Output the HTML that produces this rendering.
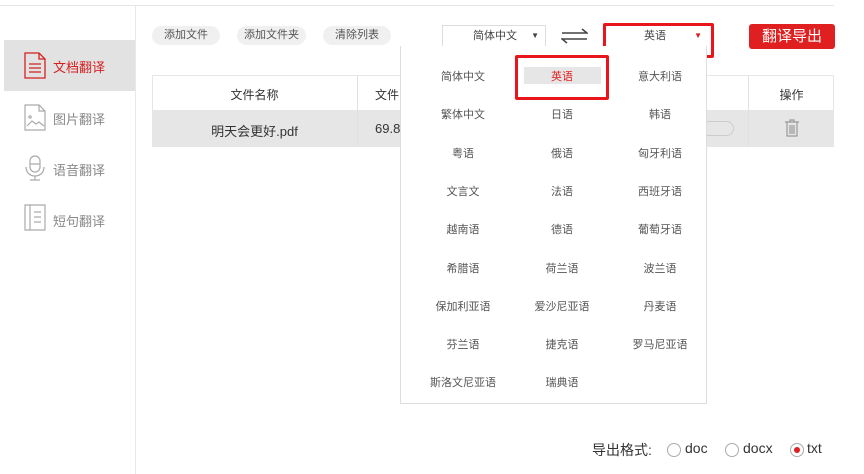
<!DOCTYPE html>
<html><head><meta charset="utf-8"><style>
*{margin:0;padding:0;box-sizing:border-box}
body{width:864px;height:474px;background:#fff;font-family:"Liberation Sans","Noto Sans CJK SC",sans-serif;position:relative;overflow:hidden;color:#333}
.a{position:absolute}
.side{left:0;top:6px;width:136px;height:468px;border-right:1px solid #e8e8e8}
.nav{position:absolute;left:4px;width:131px;height:51px;font-size:13px;color:#888}
.nav span{position:absolute;left:49px;top:17px}
.btn{position:absolute;top:26px;height:19px;background:#f0f0f0;border-radius:10px;font-size:11px;color:#555;text-align:center;line-height:19px}
.it{position:absolute;font-size:11px;color:#555;width:98px;text-align:center}
</style></head><body>
<div class="a" style="left:0;top:5px;width:834px;height:1px;background:#e6e6e6"></div>
<div class="a side"></div>
<div class="nav" style="top:40px;background:#e2e2e2;color:#d42020"><svg class="a" style="left:20px;top:12px" width="22" height="27" viewBox="0 0 22 27" fill="none" stroke="#d42020" stroke-width="1.3"><path d="M1 1h14l6 6v19H1z M15 1v6h6 M5 12h12 M5 16h12 M5 20h12"/></svg><span>文档翻译</span></div>
<div class="nav" style="top:92px"><svg class="a" style="left:20px;top:12px" width="22" height="27" viewBox="0 0 22 27" fill="none" stroke="#aaa" stroke-width="1.2"><path d="M1 1h14l6 6v19H1z M15 1v6h6 M3 22l5-5 4 3 3-2 5 4"/><circle cx="6" cy="13" r="1.2"/></svg><span>图片翻译</span></div>
<div class="nav" style="top:143px"><svg class="a" style="left:20px;top:12px" width="22" height="27" viewBox="0 0 22 27" fill="none" stroke="#aaa" stroke-width="1.2"><rect x="6" y="1" width="10" height="16" rx="5"/><path d="M6 9h10 M2 12c0 12 18 12 18 0 M11 21v4 M6 25h10"/></svg><span>语音翻译</span></div>
<div class="nav" style="top:194px"><svg class="a" style="left:20px;top:10px" width="22" height="27" viewBox="0 0 22 27" fill="none" stroke="#aaa" stroke-width="1.2"><path d="M1 1h20v25H1z M6 1v25 M10 8h7 M10 13h7 M10 18h7"/></svg><span>短句翻译</span></div>

<div class="btn" style="left:152px;width:68px">添加文件</div>
<div class="btn" style="left:237px;width:69px">添加文件夹</div>
<div class="btn" style="left:323px;width:68px">清除列表</div>

<div class="a" style="left:442px;top:25px;width:104px;height:22px;border:1px solid #ddd;font-size:11px;line-height:20px;padding-left:30px;color:#444">简体中文<span class="a" style="right:6px;top:0;font-size:8px">▼</span></div>
<svg class="a" style="left:561px;top:28px" width="27" height="16" viewBox="0 0 27 16" fill="none" stroke="#444" stroke-width="1.5"><path d="M1 5h25l-5-4 M26 11H1l5 4"/></svg>
<div class="a" style="left:606px;top:26px;width:104px;height:22px;font-size:11px;line-height:20px;padding-left:38px;color:#444">英语<span class="a" style="right:8px;top:0;font-size:8px;color:#d42020">▼</span></div>
<div class="a" style="left:603px;top:23px;width:111px;height:35px;border:3px solid #e8161b;border-radius:2px"></div>
<div class="a" style="left:749px;top:24px;width:86px;height:25px;background:#e02020;border-radius:3px;color:#fff;font-size:15px;text-align:center;line-height:25px">翻译导出</div>

<div class="a" style="left:152px;top:75px;width:682px;height:72px;border:1px solid #e6e6e6"></div>
<div class="a" style="left:152px;top:110px;width:682px;height:37px;background:#e6e6e6"></div>
<div class="a" style="left:357px;top:76px;width:1px;height:70px;background:#e0e0e0"></div>
<div class="a" style="left:748px;top:76px;width:1px;height:70px;background:#e0e0e0"></div>
<div class="a" style="left:152px;top:86px;width:205px;text-align:center;font-size:12px">文件名称</div>
<div class="a" style="left:375px;top:86px;font-size:12px">文件</div>
<div class="a" style="left:749px;top:86px;width:85px;text-align:center;font-size:12px">操作</div>
<div class="a" style="left:152px;top:121px;width:205px;text-align:center;font-size:13px">明天会更好.pdf</div>
<div class="a" style="left:375px;top:121px;font-size:13px">69.8</div>
<div class="a" style="left:690px;top:121px;width:44px;height:15px;border:1px solid #ccc;border-left:none;border-radius:0 8px 8px 0"></div>
<svg class="a" style="left:784px;top:119px" width="16" height="18" viewBox="0 0 16 18" fill="none" stroke="#999" stroke-width="1.2"><path d="M1 3h14 M6 3V1h4v2 M3 3v14h10V3 M6 6v9 M8 6v9 M10 6v9"/></svg>

<div class="a" style="left:400px;top:46px;width:307px;height:358px;background:#fff;border:1px solid #ddd;border-top:none"></div>
<div class="a" style="left:524px;top:67px;width:77px;height:17px;background:#e6e6e6"></div>
<div id="g"></div>
<div class="a" style="left:515px;top:55px;width:94px;height:45px;border:3px solid #e8161b;border-radius:2px"></div>

<div class="a" style="left:592px;top:440px;font-size:14px;color:#333">导出格式:</div>
<div class="a" style="left:667px;top:443px;width:14px;height:14px;border:1px solid #aaa;border-radius:50%"></div>
<div class="a" style="left:685px;top:440px;font-size:14px">doc</div>
<div class="a" style="left:725px;top:443px;width:14px;height:14px;border:1px solid #aaa;border-radius:50%"></div>
<div class="a" style="left:743px;top:440px;font-size:14px">docx</div>
<div class="a" style="left:790px;top:443px;width:14px;height:14px;border:1px solid #aaa;border-radius:50%"><div style="margin:3px;width:6px;height:6px;border-radius:50%;background:#e02020"></div></div>
<div class="a" style="left:807px;top:440px;font-size:14px">txt</div>

<div class="it" style="left:414px;top:68px">简体中文</div><div class="it" style="left:513px;top:68px;color:#e02020">英语</div><div class="it" style="left:611px;top:68px">意大利语</div>
<div class="it" style="left:414px;top:106px">繁体中文</div><div class="it" style="left:513px;top:106px">日语</div><div class="it" style="left:611px;top:106px">韩语</div>
<div class="it" style="left:414px;top:145px">粤语</div><div class="it" style="left:513px;top:145px">俄语</div><div class="it" style="left:611px;top:145px">匈牙利语</div>
<div class="it" style="left:414px;top:183px">文言文</div><div class="it" style="left:513px;top:183px">法语</div><div class="it" style="left:611px;top:183px">西班牙语</div>
<div class="it" style="left:414px;top:221px">越南语</div><div class="it" style="left:513px;top:221px">德语</div><div class="it" style="left:611px;top:221px">葡萄牙语</div>
<div class="it" style="left:414px;top:260px">希腊语</div><div class="it" style="left:513px;top:260px">荷兰语</div><div class="it" style="left:611px;top:260px">波兰语</div>
<div class="it" style="left:414px;top:298px">保加利亚语</div><div class="it" style="left:513px;top:298px">爱沙尼亚语</div><div class="it" style="left:611px;top:298px">丹麦语</div>
<div class="it" style="left:414px;top:336px">芬兰语</div><div class="it" style="left:513px;top:336px">捷克语</div><div class="it" style="left:611px;top:336px">罗马尼亚语</div>
<div class="it" style="left:414px;top:374px">斯洛文尼亚语</div><div class="it" style="left:513px;top:374px">瑞典语</div>
</body></html>
